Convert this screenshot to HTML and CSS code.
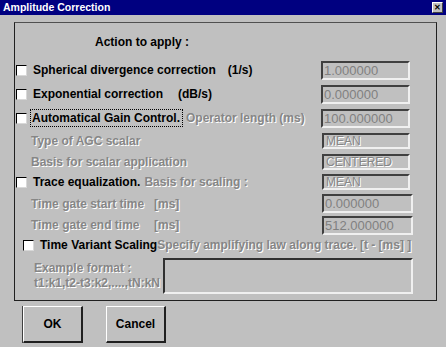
FILE: index.html
```html
<!DOCTYPE html>
<html lang="en">
<head>
    <meta charset="UTF-8">
    <meta name="viewport" content="width=device-width, initial-scale=1.0">
    <title>Amplitude Correction</title>
    <link rel="stylesheet" href="styles.css">
</head>
<body>
    <div class="titlebar">
        <span class="title">Amplitude Correction</span>
        <span class="close">&#x2715;</span>
    </div>

    <div class="dialog">
        <div class="group">
            <div class="heading">Action to apply :</div>

            <div class="row r1">
                <span class="check"></span>
                <span class="label">Spherical divergence correction</span>
                <span class="unit unit-sph">(1/s)</span>
                <span class="field">1.000000</span>
            </div>

            <div class="row r2">
                <span class="check"></span>
                <span class="label">Exponential correction</span>
                <span class="unit unit-exp">(dB/s)</span>
                <span class="field">0.000000</span>
            </div>

            <div class="row r3">
                <span class="check"></span>
                <span class="label focus">Automatical Gain Control.</span>
                <span class="dim after">Operator length (ms)</span>
                <span class="field">100.000000</span>
            </div>

            <div class="row r4">
                <span class="dim sub">Type of AGC scalar</span>
                <span class="field small">MEAN</span>
            </div>

            <div class="row r5">
                <span class="dim sub">Basis for scalar application</span>
                <span class="field small">CENTERED</span>
            </div>

            <div class="row r6">
                <span class="check"></span>
                <span class="label">Trace equalization.</span>
                <span class="dim after">Basis for scaling :</span>
                <span class="field small">MEAN</span>
            </div>

            <div class="row r7">
                <span class="dim sub gate">Time gate start time</span>
                <span class="dim">[ms]</span>
                <span class="field wide">0.000000</span>
            </div>

            <div class="row r8">
                <span class="dim sub gate">Time gate end time</span>
                <span class="dim">[ms]</span>
                <span class="field wide">512.000000</span>
            </div>

            <div class="row r9">
                <span class="check indent"></span>
                <span class="label">Time Variant Scaling</span><span class="dim">Specify amplifying law along trace. [t - [ms] ]</span>
            </div>

            <div class="example">
                <div class="dim example-text">Example format :<br>t1:k1,t2-t3:k2,....,tN:kN</div>
                <div class="textarea"></div>
            </div>
        </div>

        <div class="buttons">
            <button class="btn default">OK</button>
            <button class="btn">Cancel</button>
        </div>
    </div>
</body>
</html>
```

FILE: styles.css
```css
body {
    margin: 0;
    background-color: #c0c0c0;
    font-family: "Liberation Sans", Arial, sans-serif;
    font-size: 12px;
    font-weight: bold;
    color: #000;
    overflow: hidden;
}

.titlebar {
    height: 15px;
    background-color: #000080;
    display: flex;
    align-items: center;
    justify-content: space-between;
    padding: 0 3px 0 3px;
}

.title {
    color: #fff;
    font-size: 10.5px;
    line-height: 15px;
}

.close {
    width: 9px;
    height: 9px;
    background-color: #c0c0c0;
    border-style: solid;
    border-width: 1px;
    border-color: #fff #404040 #404040 #fff;
    font-size: 8px;
    line-height: 9px;
    text-align: center;
    color: #000;
}

.dialog {
    padding: 7px 0 0 14px;
}

.group {
    width: 421px;
    height: 277px;
    border: 1px solid #202020;
    border-top-color: #505050;
}

.heading {
    height: 35px;
    box-sizing: border-box;
    padding: 11px 0 0 80px;
    line-height: 16px;
}

.row {
    display: flex;
    align-items: center;
    white-space: nowrap;
}

.r1, .r2, .r3 { height: 24px; }
.r4, .r5 { height: 21px; }
.r6 { height: 20px; }
.r7 { height: 23px; }
.r8 { height: 20px; }
.r9 { height: 20px; }

.check {
    width: 9px;
    height: 9px;
    margin: 0 6px 0 1px;
    background-color: #fff;
    border-style: solid;
    border-width: 1px;
    border-color: #000 #d8d8d8 #d8d8d8 #000;
    flex-shrink: 0;
}

.check.indent {
    margin-left: 8px;
}

.label {
    line-height: 14px;
}

.focus {
    outline: 1px dotted #000;
    outline-offset: 0;
    padding: 0 2px 0 1px;
    margin-left: -2px;
    line-height: 16px;
}

.unit-sph { margin-left: 12px; }
.unit-exp { margin-left: 15px; }

.dim {
    color: #868686;
    text-shadow: 1px 1px 0 #fff;
}

.after { margin-left: 4px; }

.sub { margin-left: 16px; }

.gate {
    width: 123px;
}

.field {
    margin-left: auto;
    margin-right: 26px;
    width: 84px;
    height: 15px;
    border-style: solid;
    border-width: 2px;
    border-color: #404040 #f0f0f0 #f0f0f0 #404040;
    color: #808080;
    font-size: 13px;
    font-weight: normal;
    line-height: 15px;
    padding-left: 1px;
    white-space: nowrap;
}

.field.small {
    width: 82px;
    height: 12px;
    font-size: 12px;
    line-height: 13px;
    padding-left: 2px;
    color: #868686;
    text-shadow: 1px 1px 0 #fff;
}

.field.wide {
    margin-right: 23px;
    width: 86px;
}

.example {
    display: flex;
    margin-top: 3px;
}

.example-text {
    margin-left: 19px;
    padding-top: 3px;
    line-height: 15px;
    width: 129px;
    flex-shrink: 0;
    white-space: nowrap;
}

.textarea {
    width: 246px;
    height: 32px;
    border-style: solid;
    border-width: 2px;
    border-color: #303030 #f0f0f0 #f0f0f0 #303030;
}

.buttons {
    display: flex;
    gap: 23px;
    margin: 5px 0 0 9px;
}

.btn {
    width: 60px;
    height: 37px;
    background-color: #c0c0c0;
    font-family: "Liberation Sans", Arial, sans-serif;
    font-size: 12px;
    font-weight: bold;
    color: #000;
    border-style: solid;
    border-width: 1px 2px 2px 1px;
    border-color: #fff #202020 #202020 #fff;
    padding: 0;
}

.btn.default {
    box-shadow: -1px 0 0 #404040;
}
```
